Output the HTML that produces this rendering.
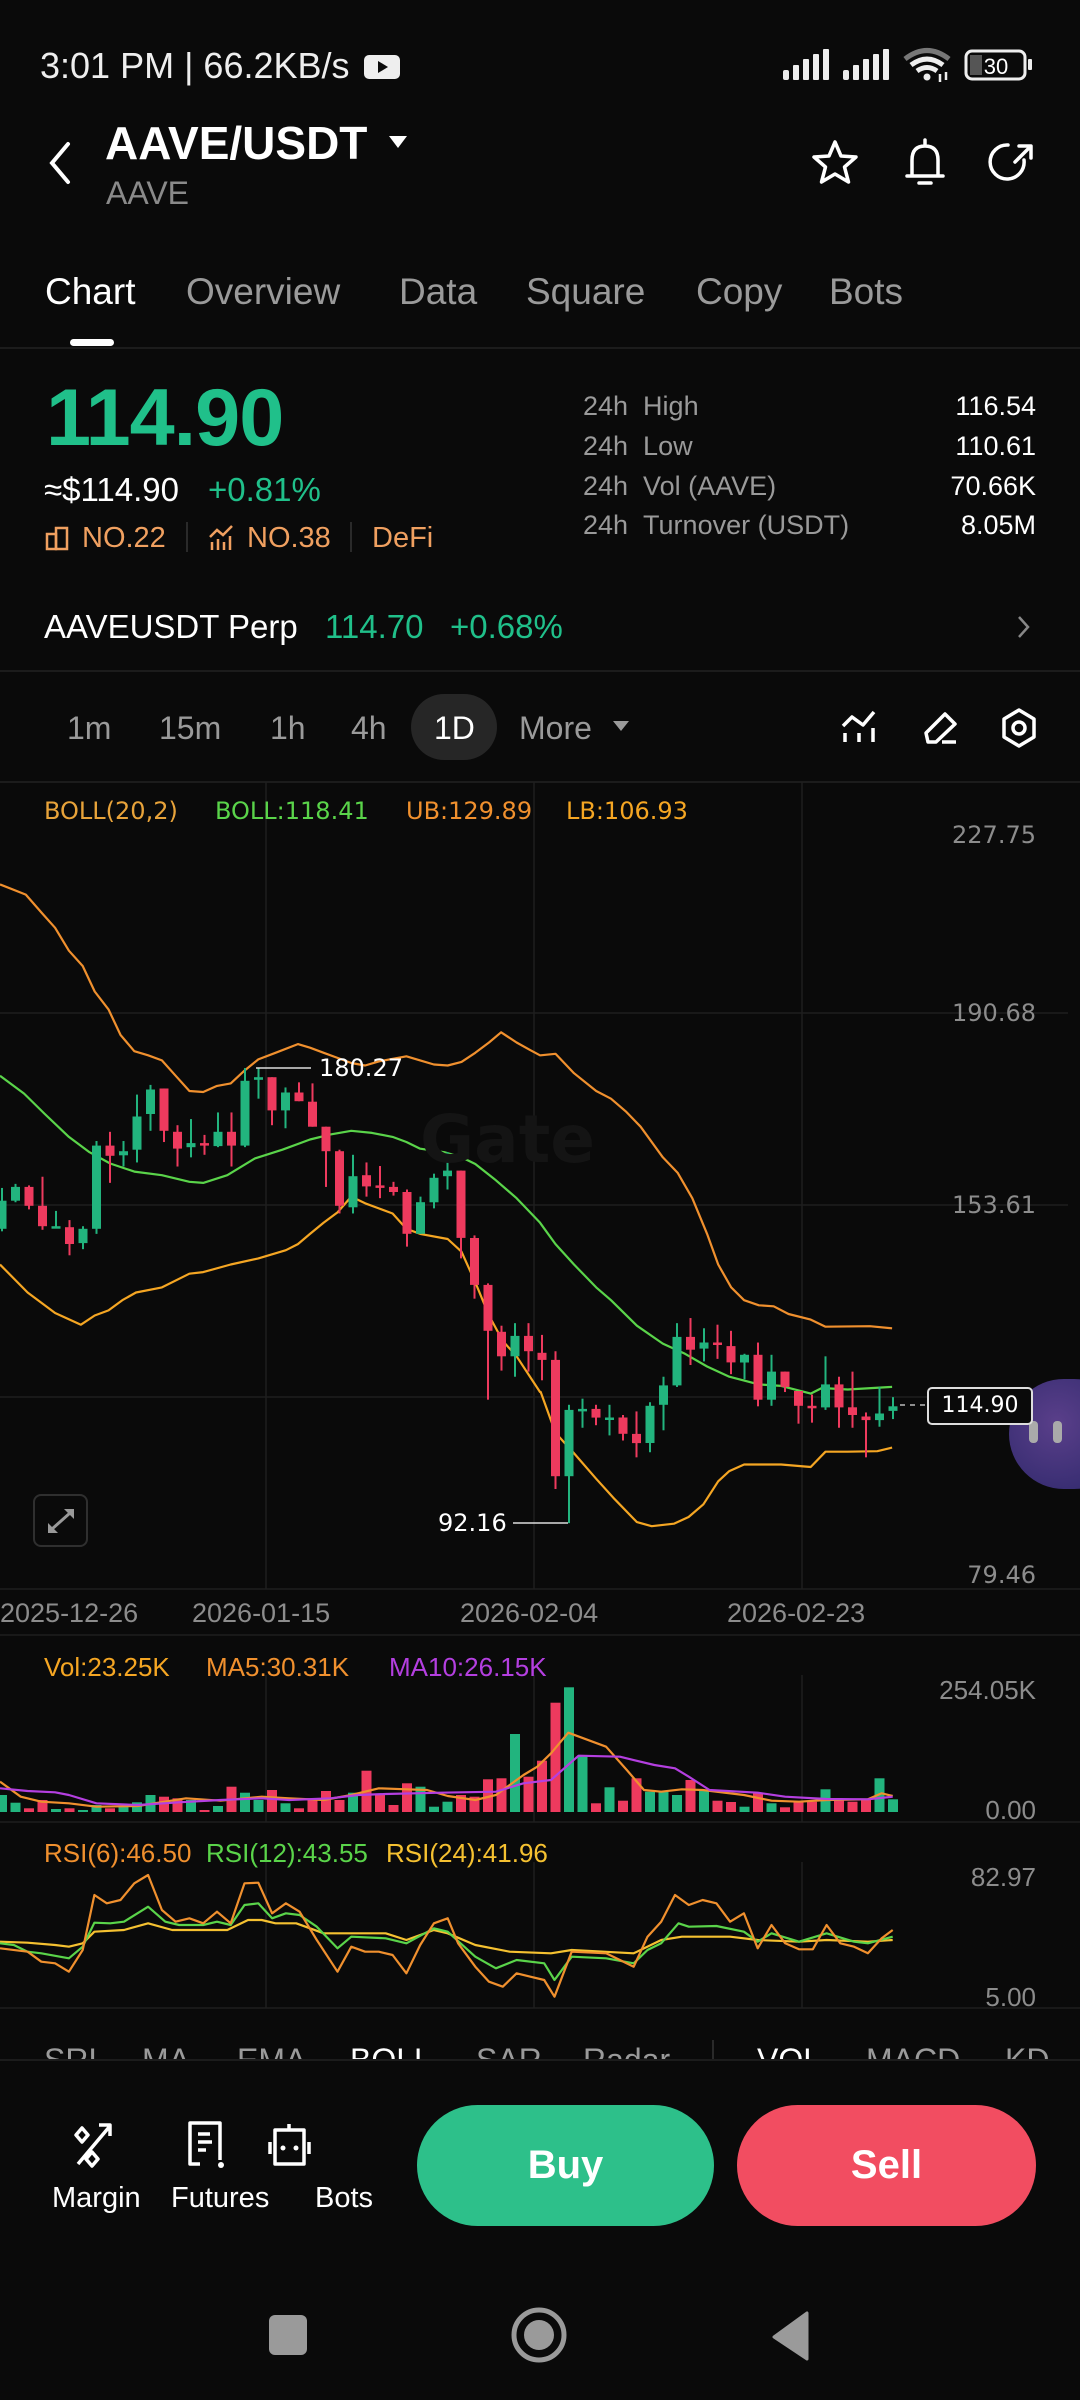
<!DOCTYPE html>
<html><head><meta charset="utf-8">
<style>
*{margin:0;padding:0;box-sizing:border-box}
body{width:1080px;height:2400px;background:#0a0a0a;position:relative;overflow:hidden;font-family:"Liberation Sans",sans-serif;color:#fff}
.a{position:absolute;white-space:nowrap}
.g{color:#8c8c8c}
.w{color:#fff}
.dv{font-family:"DejaVu Sans","Liberation Sans",sans-serif}
.hl{position:absolute;left:0;right:0;height:2px;background:#1c1c1c}
</style></head><body>

<!-- status bar -->
<div class="a" style="left:40px;top:46px;font-size:36px;line-height:40px;color:#eee">3:01 PM | 66.2KB/s</div>
<div class="a" style="left:364px;top:55px;width:36px;height:24px;background:#eee;border-radius:5px"></div>
<svg class="a" style="left:364px;top:55px" width="36" height="24"><path d="M14 6 L24 12 L14 18Z" fill="#0a0a0a"/></svg>
<svg class="a" style="left:780px;top:46px" width="260" height="40">
 <g fill="#eee">
  <rect x="3" y="24" width="6" height="10" rx="2"/><rect x="13" y="19" width="6" height="15" rx="1"/><rect x="23" y="13" width="6" height="21" rx="1"/><rect x="33" y="8" width="6" height="26" rx="1"/><rect x="43" y="3" width="6" height="31" rx="1"/>
  <rect x="63" y="24" width="6" height="10" rx="2"/><rect x="73" y="19" width="6" height="15" rx="1"/><rect x="83" y="13" width="6" height="21" rx="1"/><rect x="93" y="8" width="6" height="26" rx="1"/><rect x="103" y="3" width="6" height="31" rx="1"/>
 </g>
 <path d="M125 13 Q147 -4 169 13" stroke="#777" stroke-width="5" fill="none"/>
 <path d="M131 19 Q147 7 163 19" stroke="#eee" stroke-width="5" fill="none"/>
 <path d="M137 25 Q147 18 157 25" stroke="#eee" stroke-width="5" fill="none"/>
 <circle cx="147" cy="31" r="3.5" fill="#eee"/>
 <path d="M160 28 v8 M166 26 v8" stroke="#eee" stroke-width="2.5"/>
 <rect x="186" y="5" width="59" height="28" rx="6" stroke="#eee" stroke-width="3" fill="none"/>
 <rect x="190" y="9" width="12" height="20" fill="#555"/>
 <rect x="248" y="13" width="4" height="11" rx="1" fill="#eee"/>
 <text x="216" y="28" font-size="22" fill="#fff" text-anchor="middle" font-family="Liberation Sans">30</text>
</svg>

<!-- header -->
<svg class="a" style="left:44px;top:140px" width="32" height="46"><path d="M24 4 L8 23 L24 42" stroke="#fff" stroke-width="4" fill="none" stroke-linecap="round"/></svg>
<div class="a" style="left:105px;top:118px;font-size:46px;line-height:50px;font-weight:bold">AAVE/USDT</div>
<svg class="a" style="left:388px;top:135px" width="20" height="14"><path d="M1 1 H19 L10 13Z" fill="#fff"/></svg>
<div class="a" style="left:106px;top:176px;font-size:32px;line-height:34px;color:#8a8a8a">AAVE</div>
<svg class="a" style="left:810px;top:138px" width="230" height="50" fill="none" stroke="#fff" stroke-width="3.5" stroke-linejoin="round" stroke-linecap="round">
 <path d="M25 4 L31 18 L46 19 L34.5 29 L38.5 44 L25 36 L11.5 44 L15.5 29 L4 19 L19 18Z"/>
 <path d="M102 38 V22 Q102 8 115 8 Q128 8 128 22 V38 M97 38 H133 M109 45 H121 M115 2 V8"/>
 <path d="M214 22 A17 17 0 1 1 198 7 M205 24 L220 9 M209 8 H221 V20"/>
</svg>

<!-- tabs -->
<div class="a" style="left:45px;top:272px;font-size:37px;line-height:40px;color:#fff">Chart</div>
<div class="a g" style="left:186px;top:272px;font-size:37px;line-height:40px;color:#9a9a9a">Overview</div>
<div class="a g" style="left:399px;top:272px;font-size:37px;line-height:40px;color:#9a9a9a">Data</div>
<div class="a g" style="left:526px;top:272px;font-size:37px;line-height:40px;color:#9a9a9a">Square</div>
<div class="a g" style="left:696px;top:272px;font-size:37px;line-height:40px;color:#9a9a9a">Copy</div>
<div class="a g" style="left:829px;top:272px;font-size:37px;line-height:40px;color:#9a9a9a">Bots</div>
<div class="a" style="left:70px;top:339px;width:44px;height:7px;border-radius:4px;background:#fff"></div>
<div class="hl" style="top:347px"></div>

<!-- price block -->
<div class="a" style="left:46px;top:376px;font-size:81px;line-height:84px;font-weight:bold;color:#20c08a;letter-spacing:-1px">114.90</div>
<div class="a" style="left:44px;top:472px;font-size:33px;line-height:36px">≈$114.90</div>
<div class="a" style="left:208px;top:472px;font-size:33px;line-height:36px;color:#20c08a">+0.81%</div>
<svg class="a" style="left:45px;top:525px" width="26" height="26" fill="none" stroke="#f0a060" stroke-width="2.5"><rect x="2" y="9" width="9" height="15"/><rect x="11" y="3" width="11" height="21"/></svg>
<div class="a" style="left:82px;top:522px;font-size:29px;line-height:32px;color:#f0a060">NO.22</div>
<div class="a" style="left:186px;top:522px;width:2px;height:30px;background:#2a2a2a"></div>
<svg class="a" style="left:208px;top:524px" width="28" height="28" fill="none" stroke="#f0a060" stroke-width="2.5"><path d="M2 13 L9 6 L15 11 L24 2"/><path d="M4 26V18 M10 26V15 M16 26V18 M22 26V12"/></svg>
<div class="a" style="left:247px;top:522px;font-size:29px;line-height:32px;color:#f0a060">NO.38</div>
<div class="a" style="left:350px;top:522px;width:2px;height:30px;background:#2a2a2a"></div>
<div class="a" style="left:372px;top:522px;font-size:29px;line-height:32px;color:#f0a060">DeFi</div>

<div class="a" style="left:583px;top:390px;font-size:27px;line-height:32px;color:#9a9a9a">24h&nbsp;&nbsp;High</div>
<div class="a" style="left:583px;top:430px;font-size:27px;line-height:32px;color:#9a9a9a">24h&nbsp;&nbsp;Low</div>
<div class="a" style="left:583px;top:470px;font-size:27px;line-height:32px;color:#9a9a9a">24h&nbsp;&nbsp;Vol (AAVE)</div>
<div class="a" style="left:583px;top:509px;font-size:27px;line-height:32px;color:#9a9a9a">24h&nbsp;&nbsp;Turnover (USDT)</div>
<div class="a" style="right:44px;top:390px;font-size:27px;line-height:32px">116.54</div>
<div class="a" style="right:44px;top:430px;font-size:27px;line-height:32px">110.61</div>
<div class="a" style="right:44px;top:470px;font-size:27px;line-height:32px">70.66K</div>
<div class="a" style="right:44px;top:509px;font-size:27px;line-height:32px">8.05M</div>

<!-- perp row -->
<div class="a" style="left:44px;top:609px;font-size:33px;line-height:36px">AAVEUSDT Perp</div>
<div class="a" style="left:325px;top:609px;font-size:33px;line-height:36px;color:#20c08a">114.70</div>
<div class="a" style="left:450px;top:609px;font-size:33px;line-height:36px;color:#20c08a">+0.68%</div>
<svg class="a" style="left:1016px;top:614px" width="16" height="26"><path d="M3 3 L12 13 L3 23" stroke="#888" stroke-width="2.5" fill="none"/></svg>
<div class="hl" style="top:670px"></div>

<!-- interval row -->
<div class="a" style="left:411px;top:694px;width:86px;height:66px;border-radius:33px;background:#262626"></div>
<div class="a" style="left:67px;top:710px;font-size:32px;line-height:36px;color:#9a9a9a">1m</div>
<div class="a" style="left:159px;top:710px;font-size:32px;line-height:36px;color:#9a9a9a">15m</div>
<div class="a" style="left:270px;top:710px;font-size:32px;line-height:36px;color:#9a9a9a">1h</div>
<div class="a" style="left:351px;top:710px;font-size:32px;line-height:36px;color:#9a9a9a">4h</div>
<div class="a" style="left:434px;top:710px;font-size:32px;line-height:36px;color:#fff">1D</div>
<div class="a" style="left:519px;top:710px;font-size:32px;line-height:36px;color:#9a9a9a">More</div>
<svg class="a" style="left:612px;top:720px" width="18" height="12"><path d="M1 1H17L9 11Z" fill="#9a9a9a"/></svg>
<svg class="a" style="left:838px;top:706px" width="205" height="46" fill="none" stroke="#fff" stroke-width="3.5" stroke-linejoin="round">
 <path d="M5 20 L14 11 L25 19 L36 6"/><path d="M7 36V27 M21 36V27 M35 36V22"/>
 <path d="M90 36 L88 27 L107 8 L117 18 L98 36Z M104 36H118"/>
 <path d="M181 4 L196 13 V31 L181 40 L166 31 V13Z"/><circle cx="181" cy="22" r="6"/>
</svg>
<div class="hl" style="top:781px"></div>

<!-- chart svg -->
<svg id="ch" class="a" style="left:0;top:0" width="1080" height="2400"></svg>

<!-- watermark -->
<div class="a dv" style="left:420px;top:1105px;font-size:66px;line-height:70px;font-weight:bold;color:#141414">Gate</div>

<!-- chart legend -->
<div class="a dv" style="left:44px;top:797px;font-size:24px;line-height:28px;color:#e8a33a">BOLL(20,2)</div>
<div class="a dv" style="left:215px;top:797px;font-size:24px;line-height:28px;color:#5ad44a">BOLL:118.41</div>
<div class="a dv" style="left:406px;top:797px;font-size:24px;line-height:28px;color:#f0902e">UB:129.89</div>
<div class="a dv" style="left:566px;top:797px;font-size:24px;line-height:28px;color:#f5a623">LB:106.93</div>
<div class="a dv g" style="right:44px;top:821px;font-size:24px;line-height:28px">227.75</div>
<div class="a dv g" style="right:44px;top:999px;font-size:24px;line-height:28px">190.68</div>
<div class="a dv g" style="right:44px;top:1191px;font-size:24px;line-height:28px">153.61</div>
<div class="a dv g" style="right:44px;top:1561px;font-size:24px;line-height:28px">79.46</div>
<div class="a dv" style="left:319px;top:1054px;font-size:24px;line-height:28px">180.27</div>
<div class="a dv" style="left:438px;top:1509px;font-size:24px;line-height:28px">92.16</div>
<div class="a" style="left:1009px;top:1379px;width:120px;height:110px;border-radius:55px;background:radial-gradient(circle at 40% 40%,#5a3f8a,#2a2668)"></div>
<div class="a" style="left:1029px;top:1421px;width:9px;height:22px;border-radius:4px;background:#aaa"></div>
<div class="a" style="left:1053px;top:1421px;width:9px;height:22px;border-radius:4px;background:#aaa"></div>
<div class="a dv" style="left:927px;top:1387px;width:106px;height:38px;border:2px solid #ddd;border-radius:5px;background:#0a0a0a;font-size:22px;line-height:34px;text-align:center">114.90</div>
<div class="a" style="left:33px;top:1494px;width:55px;height:53px;border:2px solid #2f2f2f;border-radius:8px"></div>
<svg class="a" style="left:45px;top:1506px" width="32" height="30" fill="#999"><path d="M3 27 L3 17 L13 27Z M29 3 L29 13 L19 3Z"/><path d="M7 23 L25 7" stroke="#999" stroke-width="3"/></svg>

<!-- dates -->
<div class="a" style="left:0;top:1598px;font-size:27px;line-height:30px;color:#8c8c8c">2025-12-26</div>
<div class="a" style="left:192px;top:1598px;font-size:27px;line-height:30px;color:#8c8c8c">2026-01-15</div>
<div class="a" style="left:460px;top:1598px;font-size:27px;line-height:30px;color:#8c8c8c">2026-02-04</div>
<div class="a" style="left:727px;top:1598px;font-size:27px;line-height:30px;color:#8c8c8c">2026-02-23</div>

<!-- vol legend -->
<div class="a" style="left:44px;top:1652px;font-size:26px;line-height:30px;color:#f5a623">Vol:23.25K</div>
<div class="a" style="left:206px;top:1652px;font-size:26px;line-height:30px;color:#f0902e">MA5:30.31K</div>
<div class="a" style="left:389px;top:1652px;font-size:26px;line-height:30px;color:#b43fe0">MA10:26.15K</div>
<div class="a" style="right:44px;top:1675px;font-size:26px;line-height:30px;color:#8c8c8c">254.05K</div>
<div class="a" style="right:44px;top:1795px;font-size:26px;line-height:30px;color:#8c8c8c">0.00</div>

<!-- rsi legend -->
<div class="a" style="left:44px;top:1838px;font-size:26px;line-height:30px;color:#f0902e">RSI(6):46.50</div>
<div class="a" style="left:206px;top:1838px;font-size:26px;line-height:30px;color:#5ad44a">RSI(12):43.55</div>
<div class="a" style="left:386px;top:1838px;font-size:26px;line-height:30px;color:#f5c131">RSI(24):41.96</div>
<div class="a" style="right:44px;top:1862px;font-size:26px;line-height:30px;color:#8c8c8c">82.97</div>
<div class="a" style="right:44px;top:1982px;font-size:26px;line-height:30px;color:#8c8c8c">5.00</div>

<!-- indicator tabs (clipped) -->
<div class="a" style="left:0;top:2030px;width:1080px;height:29px;overflow:hidden;font-size:32px;line-height:60px;color:#9a9a9a">
 <span class="a" style="left:44px;top:0">SRL</span>
 <span class="a" style="left:142px;top:0">MA</span>
 <span class="a" style="left:237px;top:0">EMA</span>
 <span class="a" style="left:350px;top:0;color:#fff">BOLL</span>
 <span class="a" style="left:476px;top:0">SAR</span>
 <span class="a" style="left:583px;top:0">Radar</span>
 <span class="a" style="left:712px;top:10px;width:2px;height:30px;background:#2a2a2a"></span>
 <span class="a" style="left:757px;top:0;color:#fff">VOL</span>
 <span class="a" style="left:866px;top:0">MACD</span>
 <span class="a" style="left:1005px;top:0">KD</span>
</div>
<div class="hl" style="top:2059px"></div>

<!-- bottom actions -->
<svg class="a" style="left:70px;top:2120px" width="300" height="48" fill="none" stroke="#fff" stroke-width="3.5" stroke-linejoin="round">
 <path d="M12 8 L18 15 L12 22 L6 15Z M22 32 L28 39 L22 46 L16 39Z M8 44 L40 6 M29 5 H40 V16"/>
 <path d="M130 44 H120 V3 H150 V40 M128 14 H140 M128 22 H142 M128 30 H136"/><circle cx="151" cy="45" r="3" fill="#fff" stroke="none"/>
 <path d="M219 4 V10 M205 10 H234 V44 H205 Z M200 22 V34 M239 22 V34"/><circle cx="213" cy="28" r="2.5" fill="#fff" stroke="none"/><circle cx="226" cy="28" r="2.5" fill="#fff" stroke="none"/>
</svg>
<div class="a" style="left:52px;top:2182px;font-size:29px;line-height:32px">Margin</div>
<div class="a" style="left:171px;top:2182px;font-size:29px;line-height:32px">Futures</div>
<div class="a" style="left:315px;top:2182px;font-size:29px;line-height:32px">Bots</div>
<div class="a" style="left:417px;top:2105px;width:297px;height:121px;border-radius:61px;background:#2dc08a;font-size:40px;line-height:121px;text-align:center;font-weight:bold">Buy</div>
<div class="a" style="left:737px;top:2105px;width:299px;height:121px;border-radius:61px;background:#f24d61;font-size:40px;line-height:121px;text-align:center;font-weight:bold">Sell</div>

<!-- nav -->
<div class="a" style="left:269px;top:2315px;width:38px;height:40px;border-radius:6px;background:#9a9a9a"></div>
<svg class="a" style="left:508px;top:2305px" width="62" height="62"><circle cx="31" cy="30" r="25" stroke="#9a9a9a" stroke-width="5" fill="none"/><circle cx="31" cy="30" r="15" fill="#9a9a9a"/></svg>
<svg class="a" style="left:770px;top:2310px" width="40" height="52"><path d="M37 3 V49 L4 27Z" fill="#9a9a9a" stroke="#9a9a9a" stroke-width="3" stroke-linejoin="round"/></svg>

<script>
(function(){
var s=document.getElementById('ch'),h='';
var G='#22b47e',R='#ee3a5e';
function ln(x1,y1,x2,y2,c,w){h+='<line x1="'+x1+'" y1="'+y1+'" x2="'+x2+'" y2="'+y2+'" stroke="'+c+'" stroke-width="'+(w||2)+'"/>';}
[1013,1205,1397].forEach(function(y){ln(0,y,1068,y,'#1e1e1e',1.5)});
ln(0,1589,1080,1589,'#1e1e1e',1.5);
[266,534,802].forEach(function(x){ln(x,782,x,1589,'#1e1e1e',1.5);ln(x,1675,x,1822,'#1e1e1e',1.5);ln(x,1862,x,2008,'#1e1e1e',1.5)});
ln(0,1635,1080,1635,'#1e1e1e',1.5);ln(0,1822,1080,1822,'#1e1e1e',1.5);ln(0,2008,1080,2008,'#1e1e1e',1.5);
function Y(v){return 790+v*0.5102}
var C=[
['g',805,860,780,865],['g',778,805,772,808],['r',778,815,775,822],['r',815,855,758,862],['g',855,858,825,858],
['r',857,890,843,912],['g',860,888,855,900],['g',697,860,688,870],['r',697,717,670,770],['g',708,716,688,738],
['g',640,705,597,730],['g',587,635,578,668],['r',585,668,585,690],['r',670,703,657,738],['g',692,700,645,720],
['r',692,696,676,715],['g',670,698,632,700],['r',670,697,632,738],['g',570,697,545,700],['g',563,568,545,605],
['r',563,628,563,657],['g',593,628,583,663],['r',593,610,573,610],['r',611,660,575,660],['r',660,708,660,778],
['r',708,815,705,830],['g',757,818,715,830],['r',755,777,730,797],['r',775,779,737,800],['r',778,788,768,795],
['r',788,870,783,895],['g',808,870,797,870],['g',760,808,752,820],['g',746,757,710,783],['r',746,878,746,918],
['r',878,970,873,997],['r',970,1060,967,1195],['r',1062,1110,1050,1138],['g',1070,1110,1045,1150],['r',1070,1100,1045,1140],
['r',1103,1117,1068,1157],['r',1117,1345,1100,1370],['g',1215,1345,1205,1437],['g',1213,1217,1193,1250],['r',1213,1230,1205,1245],
['g',1230,1233,1205,1265],['r',1230,1262,1225,1275],['r',1262,1280,1218,1308],['g',1207,1280,1200,1298],['g',1167,1205,1150,1255],
['g',1072,1167,1045,1170],['r',1072,1097,1035,1127],['g',1083,1095,1055,1120],['r',1083,1087,1048,1115],['r',1090,1122,1060,1145],
['g',1107,1122,1105,1155],['r',1107,1195,1083,1208],['g',1140,1195,1107,1207],['r',1140,1170,1140,1180],['r',1178,1207,1178,1242],
['r',1207,1210,1185,1240],['g',1165,1210,1110,1215],['r',1165,1210,1150,1250],['r',1210,1225,1140,1250],['r',1228,1235,1220,1308],
['g',1222,1235,1170,1248],['g',1208,1217,1190,1233]];
function pl(p,fx,fy,c,w){var a=[];for(var i=0;i<p.length;i+=2)a.push(fx(p[i]).toFixed(1)+','+fy(p[i+1]).toFixed(1));h+='<polyline points="'+a.join(' ')+'" fill="none" stroke="'+c+'" stroke-width="'+(w||2.2)+'" stroke-linejoin="round"/>';}
var X3=function(x){return x*0.3444},X4=function(x){return 500+x*0.3699};
function band(a,b,c){var p=[];for(var i=0;i<a.length;i+=2){p.push(X3(a[i]),a[i+1]);}for(var j=0;j<b.length;j+=2){if(X4(b[j])>X3(a[a.length-2]))p.push(X4(b[j]),b[j+1]);}pl(p,function(x){return x},Y,c);}
band([0,185,75,205,120,240,160,270,200,315,240,345,275,395,315,430,350,480,390,512,430,520,470,530,510,560,550,590,590,592,630,580,670,575,710,550,750,528,800,515,865,498,900,505,940,515,980,525,1020,535,1060,540,1100,532,1180,522,1220,530,1260,538,1300,540,1340,533,1380,515,1420,495,1455,475,1500,495,1540,510,1568,520],
[0,470,40,487,80,510,110,520,150,517,200,555,260,590,300,605,340,630,380,660,440,720,480,750,520,800,560,870,590,930,625,975,660,1000,700,1010,740,1012,780,1027,840,1038,880,1052,1000,1051,1060,1055],'#f0902e');
band([0,560,70,595,130,635,200,680,260,710,320,732,390,748,470,755,550,768,590,770,660,755,740,722,820,705,900,685,960,675,1020,668,1080,672,1140,680,1180,690,1220,703,1290,710,1340,720,1380,733,1440,765,1500,800,1568,848],
[0,770,50,810,110,850,150,890,200,930,260,975,300,1000,370,1050,440,1085,500,1105,560,1130,620,1150,700,1165,760,1168,840,1183,870,1172,940,1175,1060,1170],'#5ad44a');
band([0,930,80,985,160,1025,235,1048,275,1030,315,1020,355,1000,395,985,470,975,550,948,590,945,670,930,750,918,830,902,865,890,900,870,940,848,980,828,1020,797,1060,810,1100,820,1140,830,1180,860,1220,870,1300,880,1340,905,1380,965,1420,1030,1460,1080,1500,1110,1568,1180],
[0,1065,60,1120,110,1180,150,1260,200,1300,260,1350,310,1390,370,1435,410,1443,470,1438,510,1425,550,1400,590,1355,620,1335,660,1322,760,1322,840,1327,880,1297,940,1297,1020,1296,1060,1289],'#f5a623');
C.forEach(function(c,i){var x=2+13.5*i,col=c[0]=='g'?G:R;ln(x,Y(c[3]),x,Y(c[4]),col,2);var t=Y(c[1]),b=Y(c[2]);if(b-t<2.5)b=t+2.5;h+='<rect x="'+(x-4.5)+'" y="'+t.toFixed(1)+'" width="9" height="'+(b-t).toFixed(1)+'" fill="'+col+'"/>';});
ln(256,1068,311,1068,'#ddd',1.5);ln(513,1523,568,1523,'#ddd',1.5);
h+='<line x1="900" y1="1405" x2="927" y2="1405" stroke="#bbb" stroke-width="1.5" stroke-dasharray="5,5"/>';
var V=[615,638,655,630,657,655,660,645,655,650,637,615,620,625,630,660,648,590,608,630,600,640,655,630,603,630,608,542,612,645,580,590,650,635,615,620,568,565,432,560,512,338,292,495,640,592,632,565,605,605,615,570,600,632,636,650,608,640,652,635,635,598,628,635,628,565,628];
var vy=function(z){return 1590+z/3};
V.forEach(function(v,i){var x=2+13.5*i,col=C[i][0]=='g'?G:R;h+='<rect x="'+(x-5)+'" y="'+vy(v).toFixed(1)+'" width="10" height="'+(1812-vy(v)).toFixed(1)+'" fill="'+col+'"/>';});
var vx=function(z){return z*0.6888};
pl([0,575,30,620,60,635,100,640,140,650,200,648,270,625,320,632,380,620,420,625,470,630,510,615,550,595,590,598,620,600,650,618,690,630,720,615,760,555,780,530,800,490,825,428,880,470,910,540,935,600,960,605,990,598,1020,600,1080,615,1120,632,1160,635,1200,630,1260,628,1280,610,1296,618],vx,vy,'#f0902e');
pl([0,595,40,603,80,607,100,615,140,640,200,645,260,637,320,630,380,625,420,630,480,625,520,615,560,612,640,608,720,605,760,580,800,570,840,497,900,500,950,525,980,535,1000,560,1030,600,1100,608,1140,620,1200,627,1260,628,1296,620],vx,vy,'#b43fe0');
pl([0,1055,40,1058,80,1065,100,1070,120,1060,137,1025,180,1020,215,1000,250,1020,290,1020,330,1020,360,990,380,990,400,1000,430,1000,470,1030,500,1030,560,1030,590,1050,630,1020,650,1030,690,1065,740,1085,800,1090,830,1080,920,1090,960,1050,990,1040,1060,1040,1100,1050,1160,1055,1200,1050,1260,1055,1296,1050],vx,vy,'#f5c131');
pl([0,1060,20,1065,40,1085,60,1090,100,1105,120,1070,137,998,160,1000,180,995,215,950,240,995,260,1005,295,1005,315,995,335,1005,355,945,375,940,395,985,415,970,435,975,460,1010,490,1075,510,1040,560,1045,590,1060,630,1015,650,1025,690,1100,720,1135,750,1110,790,1120,805,1170,830,1100,880,1105,920,1120,940,1080,960,1060,985,1000,1000,1010,1040,1008,1080,1025,1100,1055,1120,1030,1160,1055,1200,1030,1240,1055,1260,1060,1296,1040],vx,vy,'#5ad44a');
pl([0,1075,40,1085,60,1115,80,1120,100,1145,120,1080,137,915,155,940,175,930,195,880,215,855,235,960,255,995,275,985,295,1000,315,965,335,1000,355,880,375,878,395,970,415,940,435,965,460,1050,490,1145,510,1070,530,1085,550,1085,570,1095,590,1150,610,1065,630,1000,650,985,665,1060,690,1130,710,1175,730,1190,750,1150,770,1160,790,1170,805,1220,830,1085,880,1090,920,1130,940,1040,960,995,980,915,1000,945,1020,930,1040,940,1060,995,1080,970,1100,1075,1120,1005,1140,1060,1160,1078,1180,1078,1200,1005,1220,1060,1240,1070,1260,1090,1280,1045,1296,1020],vx,vy,'#f0902e');
s.innerHTML=h;
})();
</script>
</body></html>
